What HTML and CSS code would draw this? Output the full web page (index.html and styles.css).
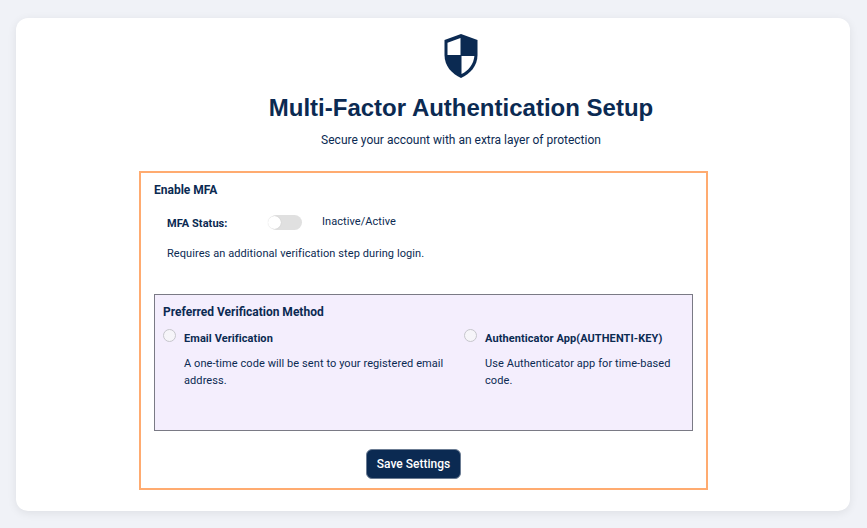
FILE: index.html
```html
<!DOCTYPE html>
<html lang="en">
<head>
<meta charset="utf-8">
<title>Multi-Factor Authentication Setup</title>
<link rel="stylesheet" href="styles.css">
</head>
<body>
<main class="card">
  <header class="head">
    <svg class="shield" viewBox="0 0 34 44" width="34" height="44" aria-hidden="true">
      <path d="M17 0 L33.5 6 V21 C33.5 32 26 40 17 44 C8 40 0.5 32 0.5 21 V6 Z" fill="#0b2a52"/>
      <path d="M16.5 4 L3.5 8.8 V21 H16.5 Z" fill="#fff"/>
      <path d="M17.5 22 H30.4 C29.6 30.5 24.2 36.8 17.5 40 Z" fill="#fff"/>
    </svg>
    <h1 class="title">Multi-Factor Authentication Setup</h1>
    <p class="subtitle">Secure your account with an extra layer of protection</p>
  </header>
  <section class="panel">
    <h2 class="panel-title">Enable MFA</h2>
    <div class="status-row">
      <span class="status-label">MFA Status:</span>
      <span class="toggle"><span class="knob"></span></span>
      <span class="status-value">Inactive/Active</span>
    </div>
    <p class="hint">Requires an additional verification step during login.</p>
    <div class="methods">
      <h3 class="methods-title">Preferred Verification Method</h3>
      <div class="method-grid">
        <div class="method">
          <span class="radio"></span>
          <div class="method-body">
            <div class="method-name">Email Verification</div>
            <p class="method-desc">A one-time code will be sent to your registered email address.</p>
          </div>
        </div>
        <div class="method">
          <span class="radio"></span>
          <div class="method-body">
            <div class="method-name">Authenticator App(AUTHENTI-KEY)</div>
            <p class="method-desc">Use Authenticator app for time-based code.</p>
          </div>
        </div>
      </div>
    </div>
    <div class="actions"><button class="save" type="button">Save Settings</button></div>
  </section>
</main>
</body>
</html>
```
FILE: styles.css
```css
* { box-sizing: border-box; }
html, body { margin: 0; height: 100%; }
body {
  background: #f0f2f7;
  padding: 18px 17px 17px 16px;
  font-family: Roboto, "Liberation Sans", sans-serif;
  color: #0b2a52;
  overflow: hidden;
}
.card {
  height: 493px;
  background: #fff;
  border-radius: 12px;
  box-shadow: 0 2px 10px rgba(0, 0, 0, 0.08);
  padding-top: 16px;
  display: flex;
  flex-direction: column;
}
.head { display: flex; flex-direction: column; align-items: center; padding-left: 56px; height: 137px; }
.shield { display: block; flex: none; }
.title {
  margin: 16px 0 0;
  font: bold 24px/28px "Liberation Sans", Arial, sans-serif;
  color: #0b2a52;
}
.subtitle { margin: 10px 0 0; font-size: 12px; line-height: 16px; }
.panel {
  width: 569px;
  height: 319px;
  margin-left: 123px;
  border: 2px solid #ffab70;
  padding: 9px 13px 0;
}
.panel-title { margin: 0; font-size: 12px; line-height: 16px; font-weight: 700; }
.status-row { display: flex; align-items: center; margin: 15px 0 0 13px; height: 20px; font-size: 11px; letter-spacing: 0.06px; }
.status-label { width: 102px; font-weight: 700; }
.toggle { width: 33px; height: 15px; border-radius: 8px; background: #e0e0e0; position: relative; margin-top: -1px; }
.knob { position: absolute; left: -1px; top: 1px; width: 13px; height: 13px; border-radius: 50%; background: #fff; box-shadow: 0 0 1px rgba(0, 0, 0, 0.2); }
.status-value { margin-left: 20px; position: relative; top: -2px; }
.hint { margin: 13px 0 0 13px; font-size: 11px; line-height: 16px; letter-spacing: 0.08px; }
.methods {
  margin-top: 32px;
  height: 137px;
  border: 1px solid #7a7a85;
  background: #f4eefd;
  padding: 9px 8px 0;
}
.methods-title { margin: 0; font-size: 12px; line-height: 16px; font-weight: 700; }
.method-grid { display: grid; grid-template-columns: 301px 221px; margin-top: 11px; }
.method { display: flex; }
.radio { width: 13px; height: 13px; border-radius: 50%; border: 1px solid #c6c6cc; background: #f6f5f9; margin-top: -2px; flex: none; }
.method-body { margin-left: 8px; }
.method-name { font-size: 11px; line-height: 16px; font-weight: 700; letter-spacing: 0.08px; }
.method-desc { margin: 8px 0 0; font-size: 11px; line-height: 17px; letter-spacing: 0.08px; }
.actions { display: flex; justify-content: center; margin-top: 18px; padding-right: 20px; }
.save {
  width: 95px;
  height: 30px;
  background: #0b2a52;
  color: #fff;
  border: 1px solid #6b7c93;
  border-radius: 6px;
  font: 500 12px Roboto, sans-serif;
  padding: 0;
}
```
